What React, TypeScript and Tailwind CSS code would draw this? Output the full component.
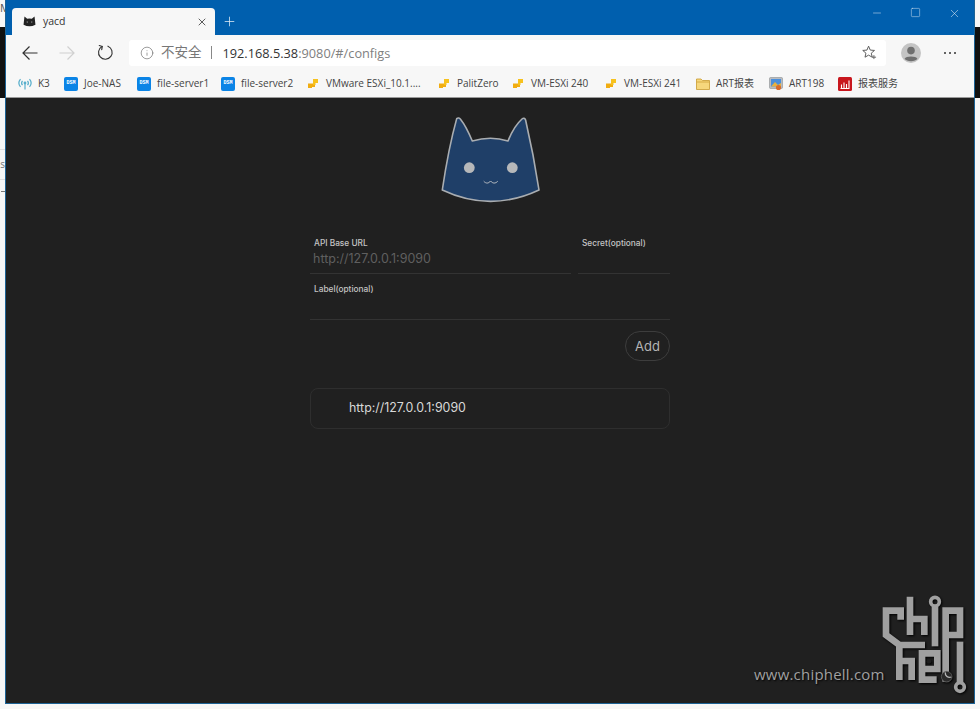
import { Info, Minus, Plus, Square, X } from "lucide-react";
import type { ReactNode } from "react";

const uiFont = "font-['Open_Sans','Noto_Sans_CJK_SC',sans-serif]";

function CatFavicon() {
  return (
    <svg viewBox="0 0 14 12" className="h-[11px] w-[13px]">
      <path d="M1.5 0.5 L4.5 3 Q7 2.4 9.5 3 L12.5 0.5 L13.5 9.5 Q7 12.8 0.5 9.5 Z" fill="#222" />
      <circle cx="4.6" cy="6.6" r="0.9" fill="#777" />
      <circle cx="9.4" cy="6.6" r="0.9" fill="#777" />
    </svg>
  );
}

function CatLogo() {
  return (
    <svg viewBox="0 0 100 86" className="ml-[2px] h-[86px] w-[100px]">
      <path
        d="M15.7 1.6 C17 0.5 18.5 1 19.5 2.2 C23 6.5 27.5 15 31.3 24 C43 20.5 56 20.5 67 24 C71 14 76.5 6 81 2 C82.5 0.8 84 1.2 84.6 3 C89 22 94.5 50 98 73 C66 88 33 88 1.3 73 C5 48 10 22 15.7 1.6 Z"
        fill="#1f3f68"
        stroke="#a9adb1"
        strokeWidth="1.6"
        strokeLinejoin="round"
      />
      <circle cx="28.3" cy="50.7" r="5.4" fill="#b6b8ba" />
      <circle cx="71.3" cy="50.7" r="5.4" fill="#b6b8ba" />
      <path
        d="M43 64.5 C45 66.8 47.5 66.6 49.6 64 C51.6 66.6 54.5 66.8 56.5 64.5"
        fill="none"
        stroke="#c4c6c8"
        strokeWidth="0.9"
        strokeLinecap="round"
      />
    </svg>
  );
}

function ReloadIcon() {
  return (
    <svg viewBox="0 0 18 18" className="h-[17px] w-[17px]" fill="none" stroke="#333" strokeWidth="1.2">
      <path d="M5.4 2.6 A7.2 7.2 0 1 0 11.6 2.3" strokeLinecap="round" />
      <path d="M2.4 1.6 L5.6 2.6 L5 6" strokeLinejoin="round" strokeLinecap="round" />
    </svg>
  );
}

function ArrowIcon({ flip, color }: { flip?: boolean; color: string }) {
  return (
    <svg viewBox="0 0 16 16" className={flip ? "h-4 w-4 rotate-180" : "h-4 w-4"} fill="none" stroke={color} strokeWidth="1.2">
      <path d="M1 8 H15.5 M7.5 1.5 L1 8 L7.5 14.5" />
    </svg>
  );
}

function StarPlus() {
  return (
    <svg viewBox="0 0 16 16" className="h-[15px] w-[15px]" fill="none" stroke="#555" strokeWidth="1">
      <path d="M7 1.2 L8.8 5.4 L13.3 5.8 L9.9 8.7 L10.9 13 L7 10.8 L3.2 13 L4.2 8.7 L0.8 5.8 L5.3 5.4 Z" strokeLinejoin="round" />
      <path d="M12.7 10.8 V15 M10.7 13 H15" strokeWidth="0.9" />
    </svg>
  );
}

function Avatar() {
  return (
    <svg viewBox="0 0 20 20" className="h-5 w-5">
      <circle cx="10" cy="10" r="10" fill="#c4c4c4" />
      <circle cx="10" cy="7.6" r="3.8" fill="#6f6f6f" />
      <path d="M3.6 15.8 C4.8 12.8 15.2 12.8 16.4 15.8 C14.5 19 5.5 19 3.6 15.8 Z" fill="#6f6f6f" />
    </svg>
  );
}

function K3Icon() {
  return (
    <svg viewBox="0 0 14 12" className="h-3 w-[14px]" fill="none" stroke="#57aecb" strokeWidth="1.2">
      <circle cx="7" cy="5" r="1.4" fill="#57aecb" stroke="none" />
      <path d="M7 6 V11.5" />
      <path d="M4.5 2.8 C3.5 4 3.5 6 4.5 7.2 M9.5 2.8 C10.5 4 10.5 6 9.5 7.2" />
      <path d="M2.5 1.2 C0.6 3.4 0.6 6.6 2.5 8.8 M11.5 1.2 C13.4 3.4 13.4 6.6 11.5 8.8" />
    </svg>
  );
}

function DsmIcon() {
  return (
    <span className="flex h-[14px] w-[14px] items-center justify-center rounded-[2px] bg-[#0b84e6] font-['Liberation_Mono',monospace] text-[5px] leading-none font-bold text-white">
      DSM
    </span>
  );
}

function PyIcon() {
  return (
    <svg viewBox="0 0 12 11" className="h-[11px] w-3">
      <path d="M6 1 H11 V5 H8.5 V7 H6 Z" fill="#f7c21e" />
      <path d="M1 5.5 H6 V7 H8 V9 H5 V10 H1 Z" fill="#f1ad12" />
    </svg>
  );
}

function FolderIcon() {
  return (
    <svg viewBox="0 0 14 12" className="h-3 w-[14px]">
      <path d="M0.5 1 H5 L6.5 2.5 H13.5 V11.5 H0.5 Z" fill="#f6d77c" stroke="#c99a2e" strokeWidth="0.8" />
      <path d="M0.9 4 H13.1" stroke="#c99a2e" strokeWidth="0.7" />
    </svg>
  );
}

function ArtIcon() {
  return (
    <svg viewBox="0 0 14 14" className="h-[14px] w-[14px]">
      <rect x="0.5" y="0.5" width="13" height="11" rx="1" fill="#b9bcc0" stroke="#8b8e92" strokeWidth="0.6" />
      <rect x="2" y="2" width="10" height="7.5" fill="#4a8fdc" />
      <path d="M2 9.5 L6 5 L9 8 L12 6 V9.5 Z" fill="#e9b23e" />
      <circle cx="9.5" cy="10.5" r="2.6" fill="#d96b2b" />
    </svg>
  );
}

function ReportIcon() {
  return (
    <svg viewBox="0 0 14 14" className="h-[14px] w-[14px]">
      <rect width="14" height="14" rx="1.5" fill="#c8161d" />
      <path d="M2.5 11.5 H11.5 M3.5 11 V7.5 M6 11 V5.5 M8.5 11 V7 M11 11 V3.5" stroke="#fff" strokeWidth="1.1" fill="none" />
    </svg>
  );
}

const bookmarks: { label: string; icon: ReactNode; width: string }[] = [
  { label: "K3", icon: <K3Icon />, width: "w-[46px]" },
  { label: "Joe-NAS", icon: <DsmIcon />, width: "w-[73px]" },
  { label: "file-server1", icon: <DsmIcon />, width: "w-[84px]" },
  { label: "file-server2", icon: <DsmIcon />, width: "w-[85px]" },
  { label: "VMware ESXi_10.1....", icon: <PyIcon />, width: "w-[131px]" },
  { label: "PalitZero", icon: <PyIcon />, width: "w-[74px]" },
  { label: "VM-ESXi 240", icon: <PyIcon />, width: "w-[93px]" },
  { label: "VM-ESXi 241", icon: <PyIcon />, width: "w-[92px]" },
  { label: "ART报表", icon: <FolderIcon />, width: "w-[73px]" },
  { label: "ART198", icon: <ArtIcon />, width: "w-[69px]" },
  { label: "报表服务", icon: <ReportIcon />, width: "w-[62px]" },
];

function Field({ label, placeholder, width }: { label: string; placeholder?: string; width: string }) {
  return (
    <div className={`${width} h-[46px] border-b border-[#333333] pl-1 pt-[10px]`}>
      <div className="h-[10px] text-[8.3px] leading-[10px] font-medium text-[#c4c4c4]">{label}</div>
      {placeholder && <div className="-ml-px mt-[3px] text-[12.5px] leading-[16px] text-[#5f5f5f]">{placeholder}</div>}
    </div>
  );
}

function ChiphellMark() {
  return (
    <svg
      viewBox="0 0 720 372"
      className="absolute top-[585px] left-[740px] h-[124px] w-[240px] drop-shadow-[1px_1px_1px_#000]"
      fill="none"
      stroke="#a0a0a0"
      strokeWidth="20"
    >
      <path d="M482 104 V77 H438 V150 L478 180 H555" />
      <path d="M510 35 V150 M510 102 H553 V150" />
      <circle cx="585" cy="50" r="13" strokeWidth="11" />
      <path d="M585 64 V184" />
      <path d="M617 290 V77 H660 V150 H617" />
      <path d="M478 180 V285 M478 228 H515 V285" />
      <path d="M590 284 H546 V205 H592 V252 H546" />
      <circle cx="567" cy="229" r="7" fill="#1f1f1f" stroke="none" />
      <path d="M660 170 V292" />
      <circle cx="660" cy="306" r="13" strokeWidth="11" />
      <circle cx="620" cy="275" r="16" stroke="#6b6b6b" strokeWidth="2" fill="#2a2a2a" />
      <path d="M616 262 A13 13 0 0 0 634 276" stroke="#b5b5b5" strokeWidth="4" />
    </svg>
  );
}

export default function App() {
  return (
    <div className={`relative flex h-[709px] w-[980px] overflow-hidden bg-[#f7f7f7] ${uiFont}`}>
      {/* scraps of the page behind the window */}
      <div className="flex w-[5px] flex-col">
        <div className="h-[27px] pt-[2px] text-[11px] leading-none text-[#555]">M</div>
        <div className="h-[71px] bg-[#111]" />
        <div className="flex-1 bg-[#f6f6f6]">
          <div className="mt-[51px] h-[30px] border-t border-[#ddd] pt-[9px] text-right text-[10px] leading-[10px] text-[#777]">
            s
          </div>
          <div className="h-[20px] border-t border-[#ddd] pt-[11px]">
            <div className="ml-[1px] h-px bg-[#777]" />
          </div>
        </div>
      </div>

      <div className="flex h-[704px] w-[970px] flex-col border-x border-b border-[#1d6294]">
        {/* title bar */}
        <div className="flex h-[35px] items-end bg-[#005fae]">
          <div className="ml-[6px] flex h-[27px] w-[203px] items-center rounded-t-[4px] bg-[#f7f7f7] pl-[11px] pr-[7px]">
            <CatFavicon />
            <span className="ml-[7px] flex-1 text-[10.5px] text-[#333]">yacd</span>
            <X size={12} strokeWidth={1.6} className="text-[#333]" />
          </div>
          <div className="ml-[7px] flex h-[27px] items-center">
            <Plus size={15} strokeWidth={1.2} className="text-[#e6eff7]" />
          </div>
          <div className="ml-auto flex h-[35px] items-start pt-[7px]">
            <Minus size={12} strokeWidth={1} className="mr-[27px] text-[#e6eff7]" />
            <Square size={11} strokeWidth={1} className="mr-[27px] text-[#e6eff7]" />
            <X size={13} strokeWidth={1} className="mr-[13px] text-[#e6eff7]" />
          </div>
        </div>

        {/* toolbar */}
        <div className="flex h-[35px] items-center bg-[#f7f7f7]">
          <div className="ml-[16px]">
            <ArrowIcon color="#333" />
          </div>
          <div className="ml-[21px]">
            <ArrowIcon flip color="#d0d0d0" />
          </div>
          <div className="ml-[22px]">
            <ReloadIcon />
          </div>
          <div className="ml-[15px] flex h-[26px] w-[757px] items-center rounded-[3px] bg-white pl-[11px] pr-[9px] text-[12.75px]">
            <Info size={14} strokeWidth={1.1} className="text-[#666]" />
            <span className="ml-[7px] text-[13.5px] text-[#777]">不安全</span>
            <span className="ml-[9px] h-[13px] w-px bg-[#888]" />
            <span className="ml-[11px] pt-[2px] text-[#333]">192.168.5.38</span>
            <span className="pt-[2px] text-[#808080]">:9080/#/configs</span>
            <span className="ml-auto">
              <StarPlus />
            </span>
          </div>
          <div className="ml-[15px]">
            <Avatar />
          </div>
          <div className="ml-[23px] flex gap-[3px]">
            <span className="h-[2px] w-[2px] rounded-full bg-[#333]" />
            <span className="h-[2px] w-[2px] rounded-full bg-[#333]" />
            <span className="h-[2px] w-[2px] rounded-full bg-[#333]" />
          </div>
        </div>

        {/* bookmarks */}
        <div className="flex h-[28px] items-center border-b border-[#9a9a9a] bg-[#f7f7f7] pl-[12px] text-[10px] text-[#444]">
          {bookmarks.map((b) => (
            <div key={b.label} className={`flex items-center ${b.width}`}>
              <span className="flex w-[14px] justify-center">{b.icon}</span>
              <span className="ml-[6px] whitespace-nowrap">{b.label}</span>
            </div>
          ))}
        </div>

        {/* yacd page */}
        <div className="flex flex-1 flex-col items-center bg-[#202020] pt-[19px] font-['Inter',sans-serif]">
          <CatLogo />
          <div className="mt-[25px] flex w-[360px] flex-col">
            <div className="flex gap-[7px]">
              <Field label="API Base URL" placeholder="http://127.0.0.1:9090" width="w-[261px]" />
              <Field label="Secret(optional)" width="w-[92px]" />
            </div>
            <Field label="Label(optional)" width="w-full" />
            <button className="mt-[11px] flex h-[30px] w-[45px] items-center justify-center self-end rounded-full border border-[#3d3d3d] pt-px text-[13px] text-[#b4b4b4]">
              Add
            </button>
            <div className="mt-[27px] flex h-[41px] items-center rounded-[8px] border border-[#2e2e2e] pl-[38px] text-[12.4px] text-[#d8d8d8]">
              http://127.0.0.1:9090
            </div>
          </div>
        </div>
      </div>

      <div className="flex w-[5px] flex-col">
        <div className="h-[27px]" />
        <div className="h-[71px] bg-[#111]" />
      </div>

      {/* watermark over the screenshot */}
      <ChiphellMark />
      <span className="absolute top-[664px] left-[754px] font-['Open_Sans',sans-serif] text-[15px] leading-[20px] tracking-[0.2px] text-[#a0a0a0] [text-shadow:1px_1px_2px_#000]">
        www.chiphell.com
      </span>
    </div>
  );
}
